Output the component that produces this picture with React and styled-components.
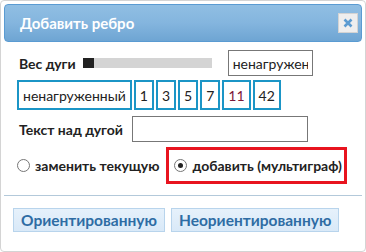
import React from 'react';
import styled, { createGlobalStyle } from 'styled-components';

const Global = createGlobalStyle`
  body {
    margin: 0;
    background: #fff;
    font-family: Lato, "Noto Sans", sans-serif;
  }
`;

const weights = [
  { label: 'ненагруженный' },
  { label: '1' },
  { label: '3' },
  { label: '5' },
  { label: '7' },
  { label: '11', accent: true },
  { label: '42' },
];

export default function App() {
  return (
    <>
      <Global />
      <Dialog>
        <TitleBar>
          <Title>Добавить ребро</Title>
          <CloseButton>
            <svg width="10" height="10" viewBox="0 0 10 10">
              <path d="M1.5 1.5 L8.5 8.5 M8.5 1.5 L1.5 8.5" stroke="#5b9bd1" strokeWidth="2.6" />
            </svg>
          </CloseButton>
        </TitleBar>
        <Content>
          <Row>
            <Label $gap={7}>Вес дуги</Label>
            <Slider>
              <Handle />
            </Slider>
            <TextInput $width={85} defaultValue="ненагруженный" readOnly />
          </Row>
          <Chips>
            {weights.map((w) => (
              <Chip key={w.label} $accent={w.accent}>{w.label}</Chip>
            ))}
          </Chips>
          <Row>
            <Label $gap={9}>Текст над дугой</Label>
            <TextInput $width={176} />
          </Row>
          <RadioRow>
            <RadioLabel>
              <Radio />
              заменить текущую
            </RadioLabel>
            <RadioLabel $marked>
              <Radio $checked />
              добавить (мультиграф)
            </RadioLabel>
          </RadioRow>
        </Content>
        <Footer>
          <Button>Ориентированную</Button>
          <Button>Неориентированную</Button>
        </Footer>
      </Dialog>
    </>
  );
}

const Dialog = styled.div`
  width: 366px;
  height: 252px;
  box-sizing: border-box;
  border: 1px solid #d4d4d4;
  border-radius: 4px;
  padding: 3px 3px 0;
  background: #fff;
  display: flex;
  flex-direction: column;
`;

const TitleBar = styled.div`
  height: 38px;
  box-sizing: border-box;
  border: 1px solid #5a9bd2;
  border-radius: 4px;
  background: linear-gradient(to bottom, #90bee3 0%, #84b5de 50%, #6ea5d3 100%);
  display: flex;
  align-items: center;
  justify-content: space-between;
  padding: 0 3px 0 15px;
`;

const Title = styled.span`
  color: #fff;
  font-weight: bold;
  font-size: 15px;
`;

const CloseButton = styled.div`
  width: 20px;
  height: 20px;
  box-sizing: border-box;
  border: 1px solid #d3d3d3;
  background: #eeeeee;
  display: flex;
  align-items: center;
  justify-content: center;
`;

const Content = styled.div`
  padding: 8px 13px 0;
  display: flex;
  flex-direction: column;
  gap: 4px;
`;

const Row = styled.div`
  display: flex;
  align-items: center;
  height: 26px;
`;

const Label = styled.span`
  font-weight: bold;
  font-size: 14px;
  color: #222;
  margin-left: 2px;
  margin-right: ${(p) => p.$gap}px;
  white-space: nowrap;
`;

const Slider = styled.div`
  width: 129px;
  height: 10px;
  background: #d4d4d4;
  margin-right: 16px;
  display: flex;
`;

const Handle = styled.div`
  width: 11px;
  height: 10px;
  background: #222;
`;

const TextInput = styled.input`
  width: ${(p) => p.$width}px;
  height: 26px;
  box-sizing: border-box;
  border: 1px solid #777;
  padding: 0 4px;
  font-family: inherit;
  font-size: 14px;
  color: #222;
  outline: none;
`;

const Chips = styled.div`
  display: flex;
  gap: 2px;
  margin-bottom: 2px;
`;

const Chip = styled.span`
  height: 30px;
  box-sizing: border-box;
  border: 2px solid #1b95c6;
  padding: 0 4px;
  display: flex;
  align-items: center;
  font-size: 14px;
  color: ${(p) => (p.$accent ? '#7d1838' : '#222')};
`;

const RadioRow = styled.div`
  display: flex;
  align-items: center;
  gap: 5px;
  margin-top: 1px;
`;

const RadioLabel = styled.label`
  display: flex;
  align-items: center;
  gap: 5px;
  font-weight: bold;
  font-size: 14px;
  color: #222;
  white-space: nowrap;
  height: 37px;
  box-sizing: border-box;
  padding: 0 2px 0 ${(p) => (p.$marked ? '5px' : '0')};
  border: ${(p) => (p.$marked ? '3px solid #e8141f' : 'none')};
`;

const Radio = styled.span`
  width: 13px;
  height: 13px;
  box-sizing: border-box;
  border-radius: 50%;
  border: 1px solid #767676;
  background: #fff;
  display: flex;
  align-items: center;
  justify-content: center;
  &::after {
    content: '';
    width: 5px;
    height: 5px;
    border-radius: 50%;
    background: ${(p) => (p.$checked ? '#222' : 'transparent')};
  }
`;

const Footer = styled.div`
  margin-top: 11px;
  border-top: 1px solid #b3c9da;
  padding: 12px 9px 0;
  display: flex;
  gap: 6px;
`;

const Button = styled.button`
  height: 24px;
  box-sizing: border-box;
  border: 1px solid #b8d4ec;
  background: linear-gradient(to bottom, #e6f1fb, #d9e9f8);
  color: #2e6ca4;
  font-family: inherit;
  font-weight: bold;
  font-size: 15.5px;
  padding: 0 7px;
`;
